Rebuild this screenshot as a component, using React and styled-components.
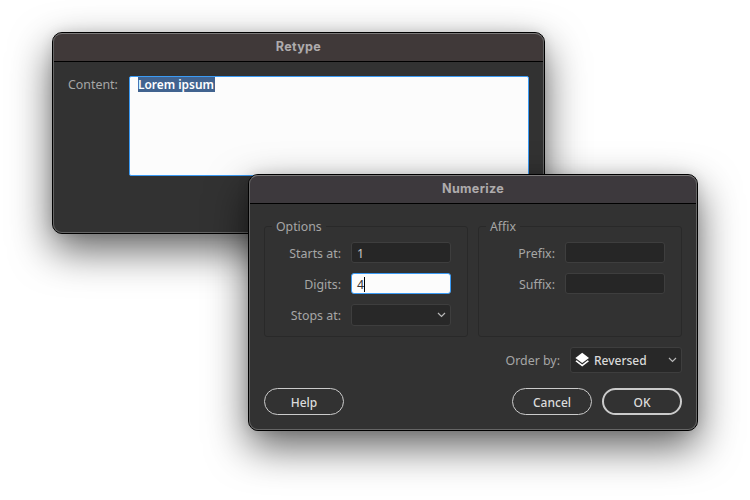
import React from "react";
import styled, { createGlobalStyle } from "styled-components";

const GlobalStyle = createGlobalStyle`
  *, *::before, *::after { box-sizing: border-box; }
  body { margin: 0; background: #fff; }
`;

const Desktop = styled.main`
  position: relative;
  width: 750px;
  height: 500px;
  overflow: hidden;
  background: #fff;
  font-family: "Noto Sans", "Open Sans", sans-serif;
  font-size: 12.4px;
  line-height: 16px;
  color: #a6a6a6;
`;

const Window = styled.section`
  position: absolute;
  left: ${(p) => p.$x}px;
  top: ${(p) => p.$y}px;
  width: ${(p) => p.$w}px;
  height: ${(p) => p.$h}px;
  display: flex;
  flex-direction: column;
  border: 1px solid #000;
  border-radius: 10px;
  background: #323232;
  box-shadow: 0 16px 40px rgba(0, 0, 0, 0.62), 0 0 12px rgba(0, 0, 0, 0.1);

  &::after {
    content: "";
    position: absolute;
    inset: 0;
    border: 1px solid #656565;
    border-top-color: #7b7979;
    border-radius: 9px;
    pointer-events: none;
  }
`;

const TitleBar = styled.header`
  flex: none;
  height: 29px;
  border-bottom: 1px solid #000;
  border-radius: 9px 9px 0 0;
  background: ${(p) => p.$tint};
  text-align: center;
  font: 700 12.6px/27px Inter, sans-serif;
  letter-spacing: 0.3px;
  color: #aeabac;
`;

const RetypeBody = styled.div`
  display: flex;
  align-items: flex-start;
  gap: 11px;
  padding: 14px 15px;
`;

const Label = styled.label`
  width: ${(p) => p.$w}px;
  flex: none;
  padding: ${(p) => (p.$top ? 1 : 2)}px ${(p) => (p.$top ? 1 : 0)}px 0 0;
  text-align: right;
  white-space: nowrap;
`;

const TextArea = styled.div`
  width: 400px;
  height: 100px;
  padding-left: 8px;
  border: 1px solid #3b9bf5;
  border-radius: 2px;
  background: #fcfcfc;
`;

const Selection = styled.span`
  display: block;
  width: 77px;
  height: 15px;
  background: #41638f;
  color: #fff;
  font-size: 11.9px;
  font-weight: 600;
  line-height: 15px;
  white-space: nowrap;
`;

const NumerizeBody = styled.div`
  display: flex;
  flex-direction: column;
  padding: 22px 15px 15px;
`;

const Groups = styled.div`
  display: flex;
  gap: 10px;
`;

const Group = styled.section`
  width: 204px;
  height: 111px;
  display: flex;
  flex-direction: column;
  align-items: flex-start;
  border: 1px solid #292929;
  border-radius: 3px;
`;

const Legend = styled.h2`
  margin: -9px 0 7px 7px;
  padding: 0 4px;
  height: 17px;
  background: #323232;
  font-size: 12.3px;
  line-height: 17px;
  font-weight: 400;
`;

const Fields = styled.div`
  display: flex;
  flex-direction: column;
  gap: 10px;
`;

const Row = styled.div`
  display: flex;
  align-items: center;
  gap: 10px;
`;

const Field = styled.div`
  display: flex;
  align-items: center;
  width: 100px;
  height: 21px;
  padding: 2px 5px 0;
  border: 1px solid ${(p) => (p.$focused ? "#3b9bf5" : "#3e3e3e")};
  border-radius: 3px;
  background: ${(p) => (p.$focused ? "#fcfcfc" : "#262626")};
  color: ${(p) => (p.$focused ? "#333" : "#c4c4c4")};
`;

const Caret = styled.i`
  width: 1px;
  height: 15px;
  margin-top: -1px;
  background: #000;
`;

const Select = styled.div`
  display: flex;
  align-items: center;
  width: ${(p) => p.$w}px;
  height: ${(p) => p.$h}px;
  padding: 0 4px;
  border: 1px solid #3e3e3e;
  border-radius: 3px;
  background: #282828;
  color: #dadada;
  font-size: 12px;
  font-weight: 500;
`;

const SelectText = styled.span`
  flex: 1;
  padding: 2px 0 0 4px;
`;

const OrderRow = styled(Row)`
  justify-content: flex-end;
  margin-top: 10px;
`;

const Actions = styled.footer`
  display: flex;
  gap: 10px;
  margin-top: 15px;
`;

const Button = styled.button`
  width: 80px;
  height: 27px;
  padding: 2px 0 0;
  border: ${(p) => (p.$primary ? 2 : 1)}px solid #cbcbcb;
  border-radius: 14px;
  background: transparent;
  color: #dcdcdc;
  font: 500 12px/16px "Noto Sans", sans-serif;
  margin-right: ${(p) => (p.$lead ? "auto" : 0)};
`;

const Icon = styled.svg`
  display: block;
  flex: none;
`;

const Chevron = () => (
  <Icon width="9" height="6" viewBox="0 0 9 6" fill="none" stroke="#b8b8b8" strokeWidth="1.2">
    <path d="M1 1l3.5 3.5L8 1" />
  </Icon>
);

const Layers = () => (
  <Icon width="15" height="16" viewBox="0 0 15 16" fill="#fff">
    <path d="M7.2.8 14 5.9 7.2 11 .4 5.9z" />
    <path d="M.4 9.2l1.3-.9 5.5 4.1 5.5-4.1 1.3.9-6.8 5.4z" />
  </Icon>
);

export default function App() {
  return (
    <Desktop>
      <GlobalStyle />
      <Window $x={52} $y={32} $w={493} $h={202}>
        <TitleBar $tint="#403939">Retype</TitleBar>
        <RetypeBody>
          <Label $w={50} $top>Content:</Label>
          <TextArea>
            <Selection>Lorem ipsum</Selection>
          </TextArea>
        </RetypeBody>
      </Window>

      <Window $x={248} $y={174} $w={450} $h={257}>
        <TitleBar $tint="#3d393d">Numerize</TitleBar>
        <NumerizeBody>
          <Groups>
            <Group>
              <Legend>Options</Legend>
              <Fields>
                <Row>
                  <Label $w={76}>Starts at:</Label>
                  <Field>1</Field>
                </Row>
                <Row>
                  <Label $w={76}>Digits:</Label>
                  <Field $focused>4<Caret /></Field>
                </Row>
                <Row>
                  <Label $w={76}>Stops at:</Label>
                  <Select $w={100} $h={22}>
                    <SelectText />
                    <Chevron />
                  </Select>
                </Row>
              </Fields>
            </Group>
            <Group>
              <Legend>Affix</Legend>
              <Fields>
                <Row>
                  <Label $w={76}>Prefix:</Label>
                  <Field />
                </Row>
                <Row>
                  <Label $w={76}>Suffix:</Label>
                  <Field />
                </Row>
              </Fields>
            </Group>
          </Groups>
          <OrderRow>
            <Label $w={60}>Order by:</Label>
            <Select $w={112} $h={26}>
              <Layers />
              <SelectText>Reversed</SelectText>
              <Chevron />
            </Select>
          </OrderRow>
          <Actions>
            <Button $lead>Help</Button>
            <Button>Cancel</Button>
            <Button $primary>OK</Button>
          </Actions>
        </NumerizeBody>
      </Window>
    </Desktop>
  );
}
